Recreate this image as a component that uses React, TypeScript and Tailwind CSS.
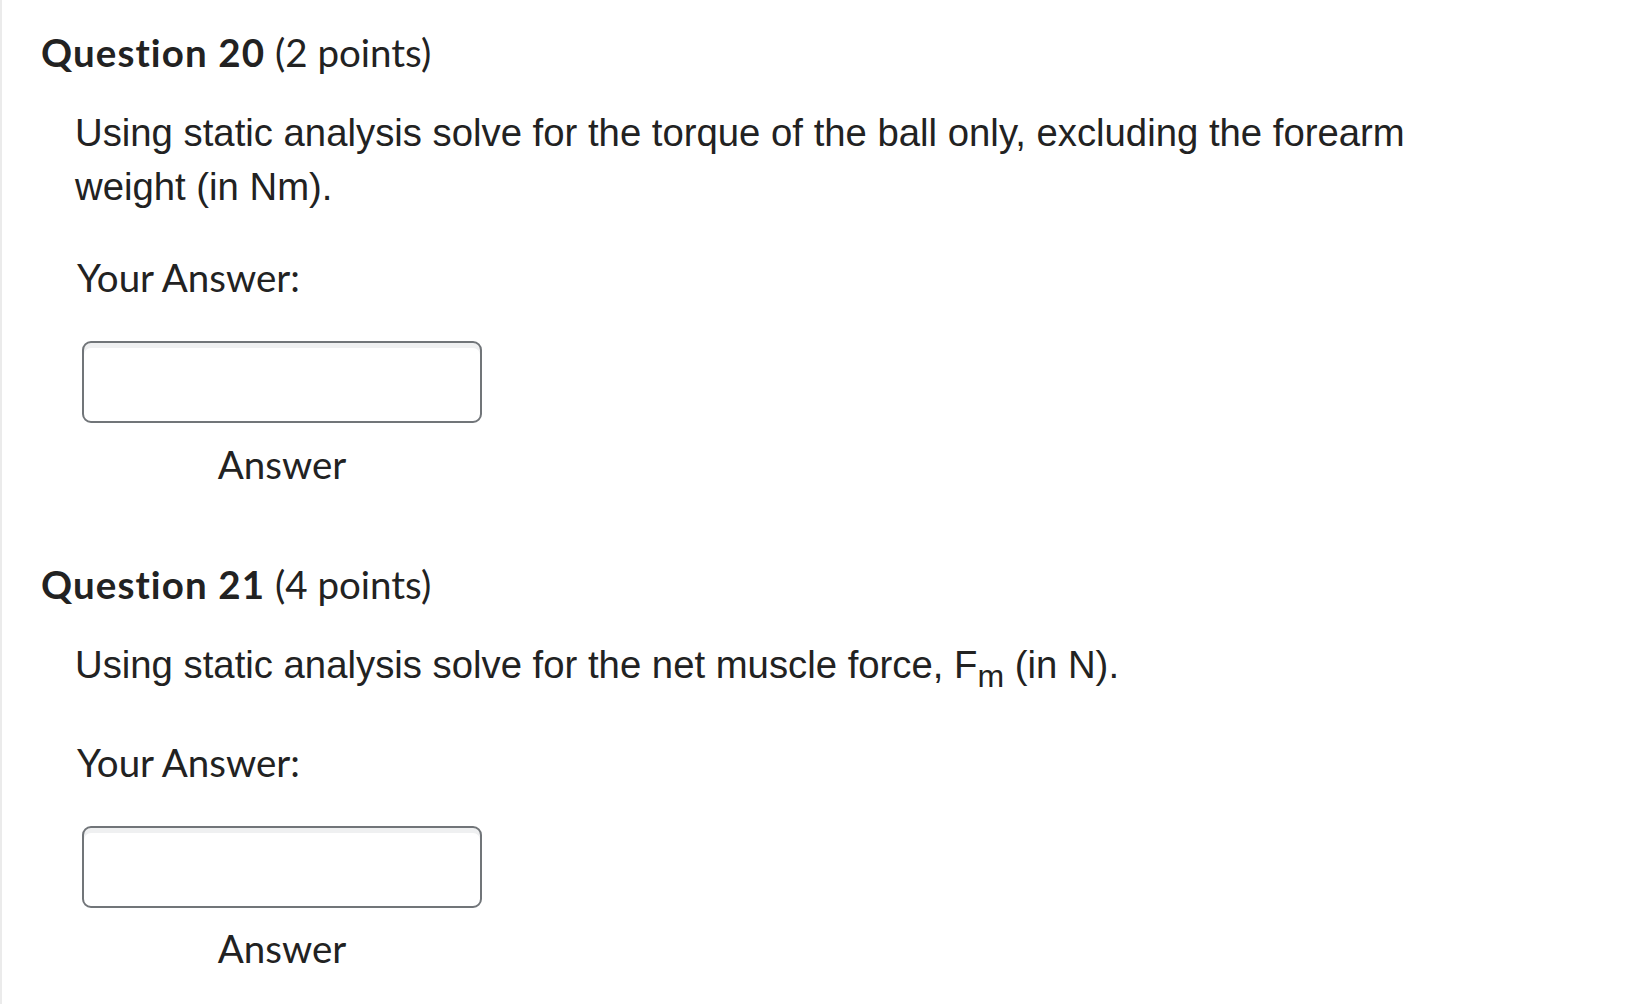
export default function App() {
  return (
    <div className="min-h-screen bg-white border-l-2 border-[#ebebeb] pl-[39px] text-[#222]">
      {/* Question 20 */}
      <h2 className="pt-[30px] text-[38.5px] leading-[45px] font-['Lato',sans-serif] [font-variant-ligatures:none]">
        <span className="font-bold tracking-[1.1px]">Question 20</span> <span>(2 points)</span>
      </h2>
      <p className="mt-[31px] ml-[34px] max-w-[1390px] text-[38.3px] leading-[53.5px] font-['Liberation_Sans',Arial,sans-serif]">
        Using static analysis solve for the torque of the ball only, excluding the forearm weight (in Nm).
      </p>
      <div className="ml-[36px] font-['Lato',sans-serif]">
        <div className="mt-[42px] text-[38.5px] leading-[45px]">Your Answer:</div>
        <div className="mt-[41px] ml-[5px] w-[400px] flex flex-col items-center">
          <input
            type="text"
            aria-label="Answer"
            className="w-full h-[82px] rounded-[9px] border-2 border-[#717579] bg-white shadow-[inset_0_5px_0_0_#eff0f1] outline-none"
          />
          <div className="mt-[19px] text-[38.5px] leading-[45px]">Answer</div>
        </div>
      </div>

      {/* Question 21 */}
      <h2 className="mt-[75px] text-[38.5px] leading-[45px] font-['Lato',sans-serif] [font-variant-ligatures:none]">
        <span className="font-bold tracking-[1.1px]">Question 21</span> <span>(4 points)</span>
      </h2>
      <p className="mt-[31px] ml-[34px] max-w-[1390px] text-[38.3px] leading-[53.5px] font-['Liberation_Sans',Arial,sans-serif]">
        Using static analysis solve for the net muscle force, F<span className="relative top-[9px] text-[32px]">m</span> (in N).
      </p>
      <div className="ml-[36px] font-['Lato',sans-serif]">
        <div className="mt-[45px] text-[38.5px] leading-[45px]">Your Answer:</div>
        <div className="mt-[41px] ml-[5px] w-[400px] flex flex-col items-center">
          <input
            type="text"
            aria-label="Answer"
            className="w-full h-[82px] rounded-[9px] border-2 border-[#717579] bg-white shadow-[inset_0_5px_0_0_#eff0f1] outline-none"
          />
          <div className="mt-[18px] text-[38.5px] leading-[45px]">Answer</div>
        </div>
      </div>
    </div>
  )
}
